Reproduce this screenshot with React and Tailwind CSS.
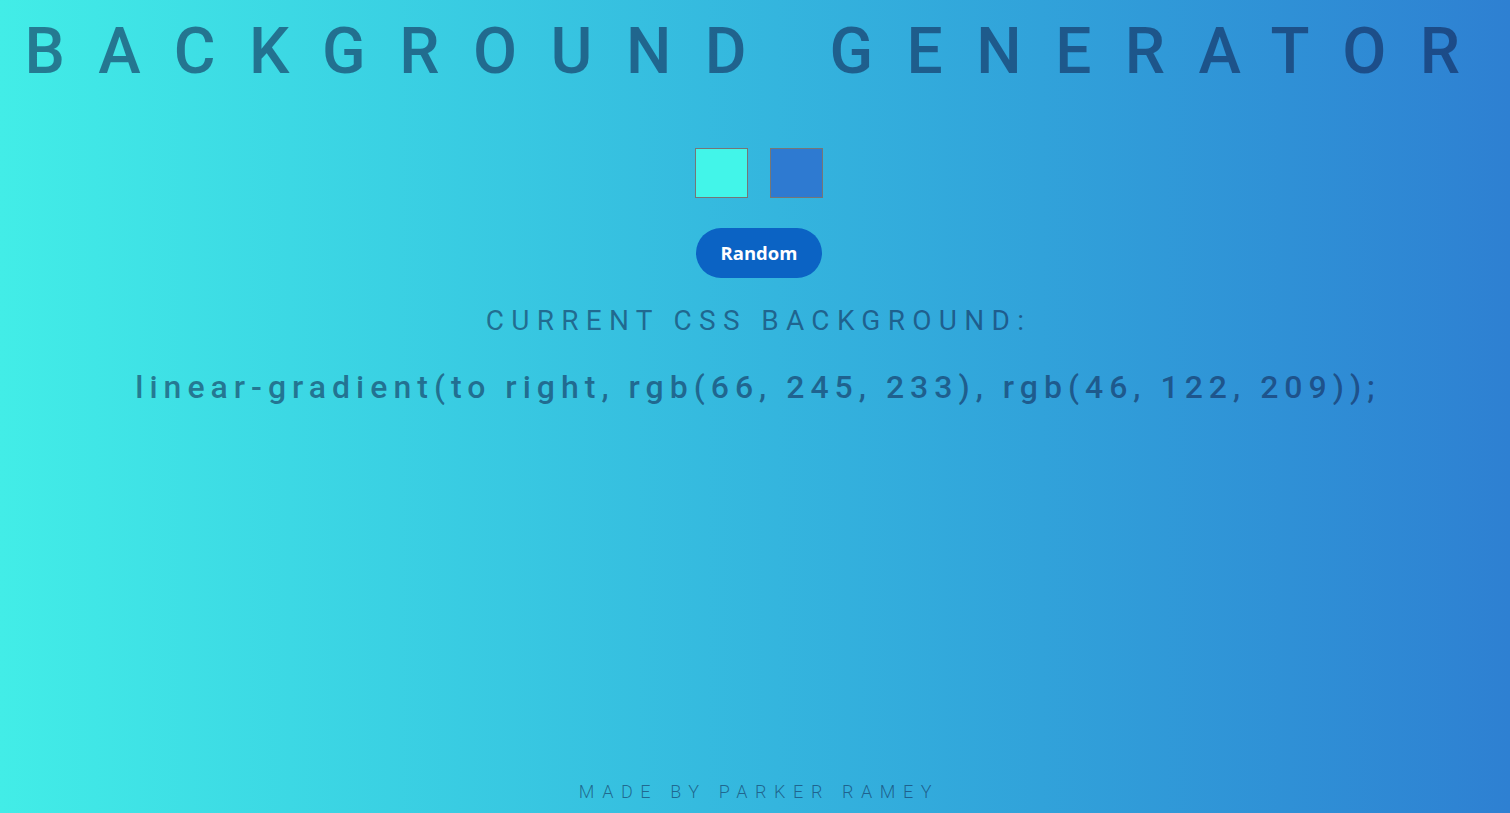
import { useState } from "react";

const FONT = { fontFamily: "Roboto, 'Liberation Sans', sans-serif" };

function Swatch({ color }) {
  return <div className="h-[50px] w-[53px] border border-[#767676]" style={{ backgroundColor: color }} />;
}

export default function App() {
  const [colors] = useState(["rgb(66, 245, 233)", "rgb(46, 122, 209)"]);
  const css = `linear-gradient(to right, ${colors[0]}, ${colors[1]});`;

  return (
    <div
      className="flex min-h-screen flex-col items-center bg-gradient-to-r from-[#42ede7] to-[#2e80d2] text-[rgba(15,30,75,0.55)]"
      style={FONT}
    >
      <h1 className="mt-[20px] pl-[8px] text-[64px] font-medium uppercase leading-none tracking-[33.5px] whitespace-nowrap">
        Background Generator
      </h1>

      <div className="mt-[64px] ml-[8px] flex gap-[22px]">
        <Swatch color={colors[0]} />
        <Swatch color={colors[1]} />
      </div>

      <button
        type="button"
        className="mt-[30px] ml-[8px] h-[50px] w-[126px] rounded-full bg-[#0b63c4] text-[18.5px] font-bold text-white"
        style={{ fontFamily: "'Open Sans', 'Noto Sans', sans-serif" }}
      >
        Random
      </button>

      <h3 className="mt-[29px] pl-[7px] text-[28px] font-normal uppercase leading-none tracking-[7.3px]">
        Current CSS Background:
      </h3>

      <p className="mt-[36px] pl-[6px] text-[32px] font-medium leading-none tracking-[6px] whitespace-nowrap">
        {css}
      </p>

      <footer className="mt-auto pb-[12px] pl-[8px] text-[18px] font-light uppercase leading-none tracking-[7.6px]">
        Made by Parker Ramey
      </footer>
    </div>
  );
}
